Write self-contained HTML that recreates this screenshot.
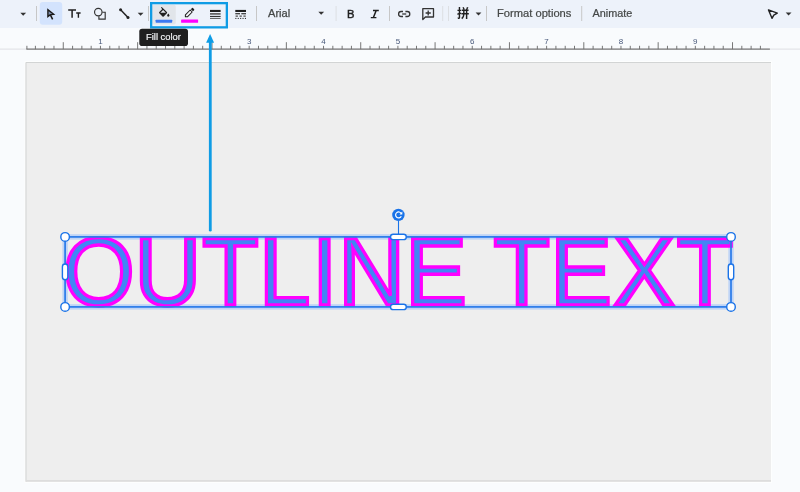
<!DOCTYPE html>
<html><head><meta charset="utf-8">
<title>Outline text</title>
<style>
html,body{margin:0;padding:0;}
body{width:800px;height:492px;overflow:hidden;background:#f9fbfd;font-family:"Liberation Sans",sans-serif;position:relative;}
svg{position:absolute;left:0;top:0;display:block;will-change:transform;}
</style></head><body>
<svg width="800" height="492" viewBox="0 0 800 492" font-family="Liberation Sans, sans-serif">
<!-- backgrounds -->
<rect x="0" y="0" width="800" height="28" fill="#edf2fa"/>
<rect x="24.5" y="61" width="747.5" height="422" fill="#fdfefe"/>
<rect x="25.5" y="62" width="745.5" height="419.7" fill="#eeeeee"/>
<path d="M26 481.7V62.5H771" fill="none" stroke="#d2d4d4" stroke-width="1"/>
<path d="M26 480.8H771" fill="none" stroke="#dddddd" stroke-width="1.8"/>

<!-- ruler -->
<path d="M0 49.1H800" stroke="#e3e5e8" stroke-width="1.2" fill="none"/>
<path d="M26.400 49.1H769.900" stroke="#7a7a7a" stroke-width="1.2" fill="none"/>
<path d="M26.90 45.8V49.2M35.40 45.8V49.2M44.69 45.8V49.2M53.98 45.8V49.2M63.28 42.2V49.2M72.58 45.8V49.2M81.87 45.8V49.2M91.16 45.8V49.2M100.46 45.8V49.2M109.75 45.8V49.2M119.05 45.8V49.2M128.34 45.8V49.2M137.64 42.2V49.2M146.94 45.8V49.2M156.23 45.8V49.2M165.53 45.8V49.2M174.82 45.8V49.2M184.11 45.8V49.2M193.41 45.8V49.2M202.70 45.8V49.2M212.00 42.2V49.2M221.29 45.8V49.2M230.59 45.8V49.2M239.88 45.8V49.2M249.18 45.8V49.2M258.48 45.8V49.2M267.77 45.8V49.2M277.06 45.8V49.2M286.36 42.2V49.2M295.66 45.8V49.2M304.95 45.8V49.2M314.25 45.8V49.2M323.54 45.8V49.2M332.84 45.8V49.2M342.13 45.8V49.2M351.43 45.8V49.2M360.72 42.2V49.2M370.02 45.8V49.2M379.31 45.8V49.2M388.61 45.8V49.2M397.90 45.8V49.2M407.19 45.8V49.2M416.49 45.8V49.2M425.79 45.8V49.2M435.08 42.2V49.2M444.38 45.8V49.2M453.67 45.8V49.2M462.97 45.8V49.2M472.26 45.8V49.2M481.56 45.8V49.2M490.85 45.8V49.2M500.15 45.8V49.2M509.44 42.2V49.2M518.74 45.8V49.2M528.03 45.8V49.2M537.33 45.8V49.2M546.62 45.8V49.2M555.91 45.8V49.2M565.21 45.8V49.2M574.50 45.8V49.2M583.80 42.2V49.2M593.10 45.8V49.2M602.39 45.8V49.2M611.69 45.8V49.2M620.98 45.8V49.2M630.27 45.8V49.2M639.57 45.8V49.2M648.87 45.8V49.2M658.16 42.2V49.2M667.46 45.8V49.2M676.75 45.8V49.2M686.05 45.8V49.2M695.34 45.8V49.2M704.63 45.8V49.2M713.93 45.8V49.2M723.23 45.8V49.2M732.52 42.2V49.2M741.82 45.8V49.2M751.11 45.8V49.2M760.40 45.8V49.2" stroke="#707070" stroke-width="0.950" fill="none"/>
<g font-size="8" fill="#47587a"><text x="100.5" y="44" text-anchor="middle">1</text><text x="174.8" y="44" text-anchor="middle">2</text><text x="249.2" y="44" text-anchor="middle">3</text><text x="323.5" y="44" text-anchor="middle">4</text><text x="397.9" y="44" text-anchor="middle">5</text><text x="472.3" y="44" text-anchor="middle">6</text><text x="546.6" y="44" text-anchor="middle">7</text><text x="621.0" y="44" text-anchor="middle">8</text><text x="695.3" y="44" text-anchor="middle">9</text></g>

<!-- toolbar left -->
<path d="M20.3 12.7h5.8l-2.9 3z" fill="#333"/>
<rect x="36" y="6" width="1" height="15" fill="#c7c7c7"/>
<rect x="39.8" y="2.1" width="22.4" height="22.7" rx="3" fill="#d3e3fd"/>
<path d="M47.900 9.600V16.600L50 14.900 53.700 14.300z" fill="#7d8fb0" stroke="#1a1a1a" stroke-width="1.400" stroke-linejoin="miter"/><path d="M50.400 14.800L52.600 19.300" stroke="#1a1a1a" stroke-width="1.500" fill="none"/>
<g fill="#1f1f1f"><path d="M68.2 9.2h7.800v1.500h-3.150v7.100h-1.500v-7.100h-3.150z"/><path d="M76.200 12.300h4.400v1.400h-1.500v4.100h-1.400v-4.100h-1.500z"/></g>
<g fill="none" stroke="#333" stroke-width="1.150"><circle cx="98.300" cy="12.100" r="3.750"/><path d="M102.300 12.200H105.200V19.100H98.900V16.300"/></g>
<g stroke="#222" fill="#222"><path d="M120.600 9.700L128 17.500" stroke-width="1.500"/><circle cx="120.600" cy="9.700" r="1.500" stroke="none"/><circle cx="128" cy="17.500" r="1.500" stroke="none"/></g>
<path d="M137.7 12.7h5.8l-2.9 3z" fill="#333"/>
<rect x="148" y="6" width="1" height="15" fill="#c7c7c7"/>

<!-- fill colour (hovered) -->
<rect x="152" y="4.8" width="23.8" height="19.6" rx="2" fill="#e1e5ea"/>
<g transform="translate(157.3 6.9) scale(0.58)" fill="#1f1f1f"><path d="M16.56 8.94L7.62 0 6.21 1.41l2.38 2.38-5.15 5.15c-.59.59-.59 1.54 0 2.12l5.5 5.5c.29.29.68.44 1.06.44s.77-.15 1.06-.44l5.5-5.5c.59-.58.59-1.53 0-2.12zM5.21 10L10 5.21 14.79 10H5.21zM19 11.5s-2 2.17-2 3.5c0 1.1.9 2 2 2s2-.9 2-2c0-1.33-2-3.500-2-3.500z"/></g>
<rect x="155.6" y="19.7" width="16.6" height="3" rx="0.6" fill="#3b78f2"/>
<!-- border colour -->
<path d="M185.400 16.800V14.800L190.200 10 192.200 12 187.400 16.800z" fill="#f3f5f8" stroke="#1f1f1f" stroke-width="1.050" stroke-linejoin="round"/><path d="M190.900 9.200L192 8.100A0.700 0.700 0 0 1 193 8.100L194.100 9.200A0.700 0.700 0 0 1 194.100 10.200L193 11.300z" fill="#1f1f1f"/>
<rect x="181.100" y="19.500" width="17" height="3.200" rx="0.500" fill="#ff00ff"/>
<!-- border weight -->
<g fill="#1f1f1f"><rect x="210" y="9.900" width="10.600" height="2.100"/><rect x="210" y="13.100" width="10.600" height="1.600" fill="#555"/><rect x="210" y="15.900" width="10.600" height="1" /><rect x="210" y="17.900" width="10.600" height="0.900" fill="#444"/></g>
<!-- border dash -->
<g fill="#1f1f1f"><rect x="235.300" y="9.900" width="10.700" height="2.100"/><rect x="235.300" y="13.200" width="4.700" height="1.100"/><rect x="241.300" y="13.200" width="4.700" height="1.100"/><rect x="235.600" y="15.400" width="2.300" height="1.500" fill="#666"/><rect x="239.500" y="15.400" width="2.300" height="1.500" fill="#666"/><rect x="243.400" y="15.400" width="2.300" height="1.500" fill="#666"/><rect x="235.300" y="17.900" width="1.100" height="1"/><rect x="237.700" y="17.900" width="1.100" height="1"/><rect x="240.100" y="17.900" width="1.100" height="1"/><rect x="242.500" y="17.900" width="1.100" height="1"/><rect x="244.900" y="17.900" width="1.100" height="1"/></g>
<rect x="256" y="6" width="1" height="15" fill="#c7c7c7"/>
<text x="268" y="16.800" font-size="10.800" fill="#444746" stroke="#444746" stroke-width="0.250" textLength="22.200" lengthAdjust="spacingAndGlyphs">Arial</text>
<path d="M318.300 11.700h5.800l-2.900 3z" fill="#333"/>
<rect x="335.600" y="6" width="1" height="15" fill="#dcdfe3"/>
<text x="346.900" y="17.600" font-size="11.200" fill="#1f1f1f" stroke="#1f1f1f" stroke-width="0.450">B</text>
<path d="M373 9.800h5.800v1.400h-2.100l-2.300 5.700h2v1.400h-5.600v-1.400h2l2.300-5.700h-2.100z" fill="#1f1f1f"/>
<rect x="389" y="6" width="1" height="15" fill="#c7c7c7"/>
<!-- link -->
<g fill="none" stroke="#333" stroke-width="1.300"><path d="M403 11.500H401.100A2.500 2.500 0 0 0 401.100 16.500H403"/><path d="M405.400 11.500H407.300A2.500 2.500 0 0 1 407.300 16.500H405.400"/><path d="M402.200 14H406.200"/></g>
<!-- comment -->
<g fill="none" stroke="#333" stroke-width="1.300"><path d="M422.800 19.600V8.700H433.500V17H425.400z" stroke-linejoin="round"/><path d="M428.200 10.400V15.600M425.600 13H430.800"/></g>
<rect x="442.200" y="6" width="1" height="15" fill="#dcdfe3"/>
<rect x="448" y="6" width="1" height="15" fill="#dcdfe3"/>
<text x="457" y="17.600" font-size="12.400" font-weight="bold" fill="#1f1f1f" font-family="Liberation Sans, Noto Sans CJK SC, sans-serif">拼</text>
<path d="M475.600 12.500h5.800l-2.900 3z" fill="#333"/>
<rect x="486" y="6" width="1" height="15" fill="#c7c7c7"/>
<text x="497" y="17" font-size="10.600" fill="#444746" stroke="#444746" stroke-width="0.200" textLength="74.400" lengthAdjust="spacingAndGlyphs">Format options</text>
<rect x="581.200" y="6" width="1" height="15" fill="#c7c7c7"/>
<text x="592.600" y="17" font-size="10.600" fill="#444746" stroke="#444746" stroke-width="0.200" textLength="39.800" lengthAdjust="spacingAndGlyphs">Animate</text>
<path d="M768.500 9.900L777.300 13.100 773.800 15.100 772 18.300z" fill="none" stroke="#222" stroke-width="1.400" stroke-linejoin="round"/>
<path d="M785.700 12.600h5.800l-2.900 3z" fill="#333"/>

<!-- annotation box + arrow -->
<rect x="151.150" y="3.150" width="75.700" height="24.200" fill="none" stroke="#0f9ce5" stroke-width="2.300"/>
<path d="M210.300 230.200V42" stroke="#0f9ce5" stroke-width="2.800" stroke-linecap="round" fill="none"/>
<path d="M210.100 34L214.100 42.800H206.100z" fill="#0f9ce5"/>

<!-- tooltip -->
<rect x="139.300" y="28.800" width="48.700" height="17.300" rx="2.800" fill="#1f1f1f"/>
<text x="146" y="40.400" font-size="9.900" fill="#f1f3f4" stroke="#f1f3f4" stroke-width="0.200" textLength="34.900" lengthAdjust="spacingAndGlyphs">Fill color</text>

<!-- selection box glow -->
<rect x="65.100" y="236.900" width="665.900" height="70" fill="none" stroke="#bfd4f6" stroke-width="5.400"/>
<!-- outline text -->
<text transform="translate(0 304.6) scale(1 1.04)" x="62.4 134.3 202.1 258.8 311.8 337.9 405.1 467.2 493.3 549.9 612.9 676.4" y="0" font-size="93.1" fill="#4285f4" stroke="#ff00ff" stroke-width="3.300" stroke-linejoin="miter" vector-effect="non-scaling-stroke" style="font-kerning:none">OUTLINE TEXT</text>
<!-- selection box -->
<rect x="65.100" y="236.900" width="665.900" height="70" fill="none" stroke="#2a7be9" stroke-width="1.700"/>
<path d="M398.500 221V234" stroke="#1a73e8" stroke-width="1.100"/>
<circle cx="398.400" cy="214.900" r="6.200" fill="#1a73e8"/>
<path d="M401.300 213.600A3 3 0 1 0 401.300 216.300" fill="none" stroke="#fff" stroke-width="1.200"/>
<path d="M402.300 211.600V214.400H399.500z" fill="#fff"/>
<g fill="#fff" stroke="#1a73e8" stroke-width="1.400">
<circle cx="65.100" cy="236.900" r="4.300"/><circle cx="731" cy="236.900" r="4.300"/><circle cx="65.100" cy="306.900" r="4.300"/><circle cx="731" cy="306.900" r="4.300"/>
<rect x="390.500" y="234.200" width="15.800" height="5.400" rx="2.700"/><rect x="390.500" y="304.200" width="15.800" height="5.400" rx="2.700"/>
<rect x="62.400" y="264" width="5.400" height="15.800" rx="2.700"/><rect x="728.300" y="264" width="5.400" height="15.800" rx="2.700"/>
</g>
</svg>
</body></html>
